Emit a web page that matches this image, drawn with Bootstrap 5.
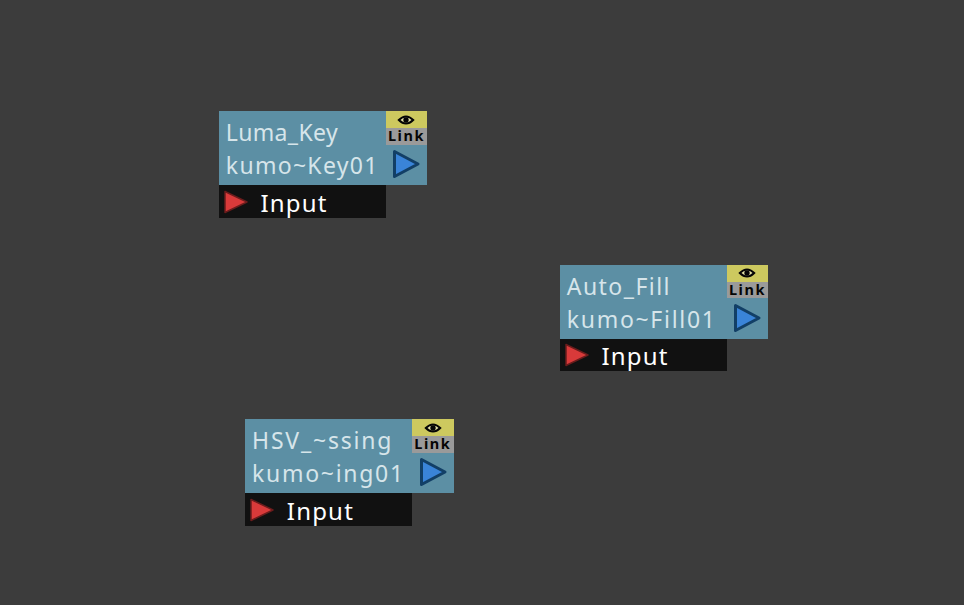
<!DOCTYPE html>
<html><head><meta charset="utf-8">
<link href="https://cdn.jsdelivr.net/npm/bootstrap@5.3.0/dist/css/bootstrap.min.css" rel="stylesheet">
<style>
html,body{height:100%;margin:0}
body{background:#3c3c3c;overflow:hidden}
.canvas-area{position:relative;width:964px;height:605px}
.flow-node{position:absolute;width:208.300px;font-family:"Noto Sans","Open Sans",sans-serif}
.node-1{left:219px;top:111px}
.node-2{left:560px;top:264.500px}
.node-3{left:245.300px;top:419px}
.node-head{height:74.300px;background:#5c8fa4;color:#d6e5ea;font-size:23px;line-height:33.300px}
.node-names{padding:5px 0 0 6.800px;white-space:nowrap}
.sp-a{letter-spacing:.35px}
.sp-b{letter-spacing:1.45px}
.sp-c{letter-spacing:1.3px}
.sp-d{letter-spacing:1.8px}
.sp-e{letter-spacing:1.7px}
.node-side{width:41.700px}
.eye-box{height:17px;background:#cdc95f}
.link-box{height:16.500px;background:#9a9a9a;color:#050505;font:bold 14.500px/14.500px "Noto Sans",sans-serif;letter-spacing:1.500px;text-align:center}
.play-box{height:39.800px}
.input-row{width:166.700px;height:32.700px;background:#111;color:#fff;font-size:24px;letter-spacing:1.200px;gap:12px;padding-left:3.500px}
.input-label{padding-top:2px}
</style></head><body>
<div class="canvas-area">
<div class="flow-node node-1">
<div class="node-head d-flex justify-content-between"><div class="node-names"><div class="sp-a">Luma_Key</div><div class="sp-c">kumo~Key01</div></div>
<div class="node-side"><div class="eye-box d-flex align-items-center justify-content-center"><svg width="18" height="12" viewBox="0 0 18 12"><path d="M1.800 6Q9-1 16.200 6Q9 13 1.800 6Z" fill="#e4e2a8" stroke="#050505" stroke-width="2"/><circle cx="9" cy="6" r="2.700" fill="#050505"/></svg></div><div class="link-box">Link</div><div class="play-box d-flex align-items-center justify-content-center"><svg width="30" height="32" viewBox="0 0 30 32"><path d="M3.500 3.500L27 16L3.500 28.500Z" fill="#3a84d8" stroke="#123f66" stroke-width="3" stroke-linejoin="round"/></svg></div></div></div>
<div class="input-row d-flex align-items-center"><svg width="26" height="26" viewBox="0 0 26 26"><path d="M2 2.500L24 13L2 23.500Z" fill="#d93a3a" stroke="#6a1c1c" stroke-width="1.500" stroke-linejoin="round"/></svg><span class="input-label">Input</span></div>
</div>
<div class="flow-node node-2">
<div class="node-head d-flex justify-content-between"><div class="node-names"><div class="sp-b">Auto_Fill</div><div class="sp-e">kumo~Fill01</div></div>
<div class="node-side"><div class="eye-box d-flex align-items-center justify-content-center"><svg width="18" height="12" viewBox="0 0 18 12"><path d="M1.800 6Q9-1 16.200 6Q9 13 1.800 6Z" fill="#e4e2a8" stroke="#050505" stroke-width="2"/><circle cx="9" cy="6" r="2.700" fill="#050505"/></svg></div><div class="link-box">Link</div><div class="play-box d-flex align-items-center justify-content-center"><svg width="30" height="32" viewBox="0 0 30 32"><path d="M3.500 3.500L27 16L3.500 28.500Z" fill="#3a84d8" stroke="#123f66" stroke-width="3" stroke-linejoin="round"/></svg></div></div></div>
<div class="input-row d-flex align-items-center"><svg width="26" height="26" viewBox="0 0 26 26"><path d="M2 2.500L24 13L2 23.500Z" fill="#d93a3a" stroke="#6a1c1c" stroke-width="1.500" stroke-linejoin="round"/></svg><span class="input-label">Input</span></div>
</div>
<div class="flow-node node-3">
<div class="node-head d-flex justify-content-between"><div class="node-names"><div class="sp-d">HSV_~ssing</div><div class="sp-e">kumo~ing01</div></div>
<div class="node-side"><div class="eye-box d-flex align-items-center justify-content-center"><svg width="18" height="12" viewBox="0 0 18 12"><path d="M1.800 6Q9-1 16.200 6Q9 13 1.800 6Z" fill="#e4e2a8" stroke="#050505" stroke-width="2"/><circle cx="9" cy="6" r="2.700" fill="#050505"/></svg></div><div class="link-box">Link</div><div class="play-box d-flex align-items-center justify-content-center"><svg width="30" height="32" viewBox="0 0 30 32"><path d="M3.500 3.500L27 16L3.500 28.500Z" fill="#3a84d8" stroke="#123f66" stroke-width="3" stroke-linejoin="round"/></svg></div></div></div>
<div class="input-row d-flex align-items-center"><svg width="26" height="26" viewBox="0 0 26 26"><path d="M2 2.500L24 13L2 23.500Z" fill="#d93a3a" stroke="#6a1c1c" stroke-width="1.500" stroke-linejoin="round"/></svg><span class="input-label">Input</span></div>
</div>
</div>
<script src="https://cdn.jsdelivr.net/npm/bootstrap@5.3.0/dist/js/bootstrap.bundle.min.js"></script>
</body></html>
